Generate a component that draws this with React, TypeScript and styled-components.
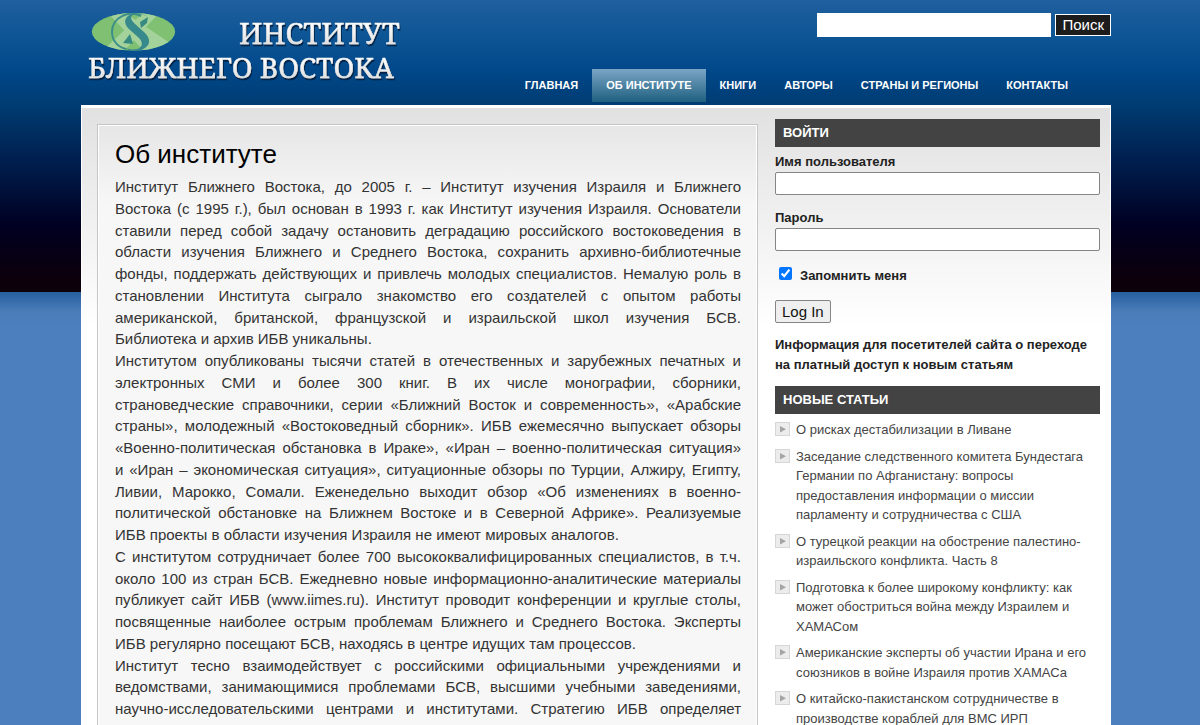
import React from "react";
import styled, { createGlobalStyle } from "styled-components";

const GlobalStyle = createGlobalStyle`
  * { box-sizing: border-box; }
  html { background: #4b7fbe; }
  body {
    margin: 0;
    font-family: "Liberation Sans", Arial, sans-serif;
    font-size: 13px;
    line-height: 1.5;
    color: #333;
    background: linear-gradient(#265f9f 0, #4b7db9 20px, #4b7fbe 40px) 0 292px / 100% 40px no-repeat, #4b7fbe;
  }
`;

const Page = styled.div`
  background: linear-gradient(#215f9f 0, #0d5594 36px, #00488a 70px, #003c72 105px, #001f4f 160px, #000022 225px, #0c000b 280px, #0c000b 292px) top / 100% 292px no-repeat;
`;

const Container = styled.div`
  width: 100%;
  max-width: 1030px;
  margin: 0 auto;
`;

const Shell = styled.div`
  padding: 0 89px 0 81px;
`;

const Header = styled.header`
  display: flex;
  justify-content: space-between;
  height: 105px;
`;

const LogoLink = styled.a`
  display: block;
  margin: 8px 0 0 6px;
  flex: none;
`;

const HeaderSide = styled.div`
  display: flex;
  flex-direction: column;
  justify-content: space-between;
  align-items: flex-end;
  padding: 13px 0 3px;
`;

const SearchForm = styled.form`
  display: flex;
  align-items: center;
  gap: 4px;
`;

const SearchInput = styled.input`
  width: 234px;
  height: 24px;
  padding: 0 4px;
  border: 0;
  background: #fff;
`;

const SearchButton = styled.button`
  height: 22px;
  padding: 0 6px;
  border: 1px solid #fff;
  background: #1c1c1c;
  color: #fff;
  font: 15px/18px "Liberation Sans", Arial, sans-serif;
`;

const Nav = styled.nav`
  display: flex;
  margin-right: 29px;
`;

const NavLink = styled.a<{ $active?: boolean }>`
  padding: 0 14px;
  font-size: 11px;
  line-height: 33px;
  font-weight: bold;
  color: #fff;
  text-decoration: none;
  text-transform: uppercase;
  white-space: nowrap;
  background: ${(p) => (p.$active ? "linear-gradient(#7ba5c6, #1f607f)" : "none")};
`;

const Main = styled.div`
  display: flex;
  align-items: flex-start;
  gap: 17px;
  padding: 11px 10px 16px 15px;
  border: 1px solid #fff;
  border-top-width: 3px;
  background: linear-gradient(#e1e1e1, #fff 220px) no-repeat, #fff;
`;

const Article = styled.article`
  flex: 1;
  min-width: 0;
  margin-top: 5px;
  padding: 13px 16px 13px 17px;
  border: 1px solid #c4c6c6;
  box-shadow: inset 0 0 0 1px #fff;
  background: linear-gradient(#e6e6e6, #f7f7f7 80px) no-repeat, #f7f7f7;
`;

const Title = styled.h1`
  margin: 0 0 6px;
  font-size: 26px;
  line-height: 32px;
  font-weight: normal;
  color: #000;
`;

const Paragraph = styled.p`
  margin: 0;
  font-size: 15px;
  line-height: 1.45;
  text-align: justify;
`;

const Sidebar = styled.aside`
  flex: none;
  width: 325px;
`;

const Heading = styled.h2`
  margin: 0;
  padding: 0 8px;
  font-size: 13px;
  line-height: 28px;
  color: #fff;
  background: #434343;
  text-transform: uppercase;
`;

const Field = styled.div`
  display: flex;
  flex-direction: column;
  margin: 5px 0 13px;
`;

const Label = styled.label`
  font-weight: bold;
  line-height: 20px;
  color: #222;
`;

const TextInput = styled.input`
  height: 23px;
  border: 1px solid #858585;
  border-radius: 2px;
  background: #fff;
`;

const Remember = styled.div`
  display: flex;
  align-items: center;
  gap: 8px;
  margin: 15px 0 14px 4px;
`;

const Checkbox = styled.input`
  width: 13px;
  height: 13px;
  margin: 0 0 5px;
`;

const LoginButton = styled.button`
  height: 23px;
  padding: 0 6px;
  border: 1px solid #858585;
  border-radius: 2px;
  background: #efefef;
  color: #111;
  font: 15px/20px "Liberation Sans", Arial, sans-serif;
`;

const Notice = styled.a`
  display: block;
  margin: 12px 0 11px;
  line-height: 20px;
  font-weight: bold;
  color: #222;
  text-decoration: none;
`;

const List = styled.ul`
  margin: 6px 0 0;
  padding: 0;
  list-style: none;
`;

const Item = styled.li`
  display: flex;
  align-items: flex-start;
  gap: 5px;
  margin-bottom: 7px;

  svg { flex: none; margin-top: 2px; }
  a { color: #444; text-decoration: none; }
`;

const Bullet = () => (
  <svg width="16" height="15" viewBox="0 0 16 15" aria-hidden="true">
    <rect x=".5" y=".5" width="14" height="13" fill="#ececec" stroke="#d6d6d6" />
    <path d="M5 4v6.500l6-3.250z" fill="#a5a5a5" />
  </svg>
);

const Logo = () => (
  <svg width="320" height="80" viewBox="0 0 320 80" role="img" aria-label="Институт Ближнего Востока">
    <defs>
      <linearGradient id="letters" x1="0" y1="0" x2="0" y2="1">
        <stop offset=".3" stopColor="#fff" />
        <stop offset="1" stopColor="#d2d2d2" />
      </linearGradient>
      <filter id="shade" x="-5%" y="-20%" width="110%" height="150%">
        <feDropShadow dx="1" dy="2" stdDeviation=".7" floodColor="#001c38" floodOpacity=".8" />
      </filter>
      <clipPath id="oval"><ellipse cx="46.500" cy="23.800" rx="41.700" ry="18.800" /></clipPath>
    </defs>
    <g clipPath="url(#oval)">
      <rect x="4" y="4" width="86" height="42" fill="#7fc072" />
      <path d="M20 4h17l46 31-14 9H58z" fill="#a4d29b" />
      <path d="M57 4h16L36 44H14z" fill="#a4d29b" />
      <path d="M54 8C42 2 25 9 25 24c0 9 6 15 14 17" fill="none" stroke="#3d9087" strokeWidth="2" />
      <path d="M61 9C56 5 46 4 41 8c-5 4-3 10 2 14l9 8c4 4 4 9-2 11-5 1-10 0-14-2 6 5 17 5 22 1 6-4 5-10 0-15L47 15c-5-5-3-9 3-9 4 0 8 1 11 3z" fill="#368a8c" />
      <path d="M61 9l-1 6-6 5-1-6zM43 26l-7 9 10 1z" fill="#368a82" />
    </g>
    <g fill="url(#letters)" stroke="#e8e8e8" strokeWidth=".5" filter="url(#shade)" fontFamily="'Noto Serif', 'DejaVu Serif', 'Liberation Serif', serif">
      <text x="152" y="36" fontSize="29">ИНСТИТУТ</text>
      <text x="1" y="70" fontSize="28">БЛИЖНЕГО ВОСТОКА</text>
    </g>
  </svg>
);

const navItems = ["Главная", "Об институте", "Книги", "Авторы", "Страны и регионы", "Контакты"];

const articles = [
  "О рисках дестабилизации в Ливане",
  "Заседание следственного комитета Бундестага Германии по Афганистану: вопросы предоставления информации о миссии парламенту и сотрудничества с США",
  "О турецкой реакции на обострение палестино-израильского конфликта. Часть 8",
  "Подготовка к более широкому конфликту: как может обостриться война между Израилем и ХАМАСом",
  "Американские эксперты об участии Ирана и его союзников в войне Израиля против ХАМАСа",
  "О китайско-пакистанском сотрудничестве в производстве кораблей для ВМС ИРП",
];

const paragraphs = [
  "Институт Ближнего Востока, до 2005 г. – Институт изучения Израиля и Ближнего Востока\u00a0(с\u00a01995\u00a0г.), был основан в 1993 г. как Институт изучения Израиля. Основатели ставили перед собой задачу остановить деградацию российского востоковедения в области изучения Ближнего и Среднего Востока, сохранить архивно-библиотечные фонды, поддержать действующих и привлечь молодых специалистов. Немалую роль в становлении Института сыграло знакомство его создателей с опытом работы американской, британской, французской и израильской школ изучения БСВ. Библиотека\u00a0и\u00a0архив ИБВ уникальны.",
  "Институтом опубликованы тысячи статей в отечественных и зарубежных печатных и электронных СМИ и более 300 книг. В их числе монографии, сборники, страноведческие\u00a0справочники, серии «Ближний Восток и современность», «Арабские страны», молодежный «Востоковедный сборник». ИБВ ежемесячно выпускает обзоры «Военно-\u2060политическая обстановка в Ираке», «Иран – военно-политическая ситуация» и\u00a0«Иран\u00a0–\u00a0экономическая ситуация», ситуационные обзоры по Турции, Алжиру, Египту, Ливии, Марокко, Сомали. Еженедельно выходит обзор «Об изменениях в военно-политической обстановке на Ближнем Востоке и в Северной Африке». Реализуемые ИБВ\u00a0проекты в области изучения Израиля не имеют мировых аналогов.",
  "С институтом сотрудничает более 700 высококвалифицированных специалистов, в т.ч. около 100 из стран БСВ. Ежедневно новые информационно-аналитические материалы публикует сайт ИБВ (www.iimes.ru). Институт проводит конференции и круглые столы, посвященные наиболее острым проблемам Ближнего и Среднего Востока. Эксперты ИБВ регулярно посещают БСВ, находясь в центре идущих там процессов.",
  "Институт тесно взаимодействует с российскими официальными учреждениями и ведомствами, занимающимися проблемами БСВ, высшими учебными заведениями, научно-исследовательскими центрами и институтами. Стратегию ИБВ определяет Попечительский совет. Президент института – Е.Я. Сатановский.",
];

export default function App() {
  return (
    <Page>
      <GlobalStyle />
      <Shell>
        <Container>
          <Header>
            <LogoLink href="#"><Logo /></LogoLink>
            <HeaderSide>
              <SearchForm>
                <SearchInput type="text" aria-label="Поиск" />
                <SearchButton type="button">Поиск</SearchButton>
              </SearchForm>
              <Nav>
                {navItems.map((label, i) => (
                  <NavLink key={label} href="#" $active={i === 1}>{label}</NavLink>
                ))}
              </Nav>
            </HeaderSide>
          </Header>
          <Main>
            <Article>
              <Title>Об институте</Title>
              {paragraphs.map((text) => <Paragraph key={text}>{text}</Paragraph>)}
            </Article>
            <Sidebar>
              <Heading>Войти</Heading>
              <form>
                <Field>
                  <Label htmlFor="login">Имя пользователя</Label>
                  <TextInput id="login" type="text" />
                </Field>
                <Field>
                  <Label htmlFor="password">Пароль</Label>
                  <TextInput id="password" type="password" />
                </Field>
                <Remember>
                  <Checkbox id="remember" type="checkbox" defaultChecked />
                  <Label htmlFor="remember">Запомнить меня</Label>
                </Remember>
                <LoginButton type="button">Log In</LoginButton>
              </form>
              <Notice href="#">Информация для посетителей сайта о переходе на платный доступ к новым статьям</Notice>
              <Heading>Новые статьи</Heading>
              <List>
                {articles.map((title) => (
                  <Item key={title}><Bullet /><a href="#">{title}</a></Item>
                ))}
              </List>
            </Sidebar>
          </Main>
        </Container>
      </Shell>
    </Page>
  );
}
